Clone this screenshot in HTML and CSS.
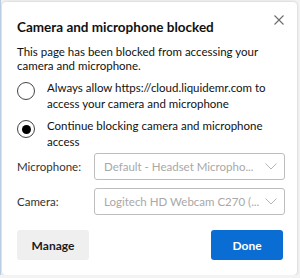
FILE: index.html
```html
<!DOCTYPE html>
<html lang="en">
<head>
    <meta charset="UTF-8">
    <title>Camera and microphone blocked</title>
    <link rel="stylesheet" href="styles.css">
</head>
<body>
    <div class="dialog">
        <div class="dialog-head">
            <h1>Camera and microphone blocked</h1>
            <button class="close-btn" aria-label="Close">
                <svg width="10" height="10" viewBox="0 0 10 10">
                    <path d="M0.5 0.5 L9.5 9.5 M9.5 0.5 L0.5 9.5" stroke="#6b6b6b" stroke-width="1.1" fill="none"/>
                </svg>
            </button>
        </div>

        <p class="intro">This page has been blocked from accessing your camera and microphone.</p>

        <div class="options">
            <label class="option">
                <span class="radio"></span>
                <span>Always allow https://cloud.liquidemr.com to access your camera and microphone</span>
            </label>
            <label class="option">
                <span class="radio checked"></span>
                <span>Continue blocking camera and microphone access</span>
            </label>
        </div>

        <div class="devices">
            <span class="device-label">Microphone:</span>
            <div class="select">
                <span class="select-text">Default - Headset Micropho...</span>
                <svg width="12" height="7" viewBox="0 0 12 7"><path d="M0.5 0.5 L6 6 L11.5 0.5" stroke="#b5b5b5" fill="none"/></svg>
            </div>
            <span class="device-label">Camera:</span>
            <div class="select">
                <span class="select-text">Logitech HD Webcam C270 (...</span>
                <svg width="12" height="7" viewBox="0 0 12 7"><path d="M0.5 0.5 L6 6 L11.5 0.5" stroke="#b5b5b5" fill="none"/></svg>
            </div>
        </div>

        <div class="actions">
            <button class="btn btn-manage">Manage</button>
            <button class="btn btn-done">Done</button>
        </div>
    </div>
</body>
</html>
```

FILE: styles.css
```css
/* Reset */
* {
    margin: 0;
    padding: 0;
    box-sizing: border-box;
}

body {
    font-family: "Segoe UI", Lato, sans-serif;
    font-size: 11.5px;
    color: #111;
    background-color: #f3f3f3;
    border-left: 1px solid #b9cde0;
    padding-top: 2px;
}

/* Dialog */
.dialog {
    width: 295px;
    height: 273px;
    margin-left: 1px;
    background: #fff;
    border-radius: 4px;
    box-shadow: 0 0 3px rgba(0, 0, 0, 0.2);
    padding: 16px 13px 12px 15px;
}

.dialog-head {
    display: flex;
    justify-content: space-between;
    align-items: flex-start;
}

.dialog-head h1 {
    font-size: 13.5px;
    font-weight: 700;
    line-height: 18px;
}

.close-btn {
    background: none;
    border: none;
    margin-top: -5px;
}

.intro {
    margin-top: 9px;
    line-height: 14px;
}

/* Radio options */
.options {
    margin-top: 7px;
    display: flex;
    flex-direction: column;
    gap: 6px;
}

.option {
    display: flex;
    align-items: flex-start;
    gap: 12px;
    line-height: 16px;
}

.radio {
    flex: none;
    width: 18px;
    height: 18px;
    margin-top: 2px;
    border: 1.5px solid #444;
    border-radius: 50%;
    display: flex;
    align-items: center;
    justify-content: center;
}

.radio.checked::after {
    content: "";
    width: 9px;
    height: 9px;
    border-radius: 50%;
    background: #000;
}

/* Device selects */
.devices {
    margin-top: 3px;
    display: grid;
    grid-template-columns: 77px 1fr;
    row-gap: 8px;
    align-items: center;
}

.device-label {
    color: #333;
}

.select {
    height: 27px;
    border: 1px solid #bdbdbd;
    border-radius: 3px;
    padding: 0 7px 0 9px;
    display: flex;
    align-items: center;
    gap: 6px;
    color: #a8a8a8;
    margin-right: 1px;
}

.select-text {
    flex: 1;
    white-space: nowrap;
    overflow: hidden;
}

/* Buttons */
.actions {
    margin-top: 15px;
    display: flex;
    justify-content: space-between;
    padding-right: 1px;
}

.btn {
    width: 72px;
    height: 30px;
    border: none;
    border-radius: 3px;
    font-family: inherit;
    font-size: 12px;
    font-weight: 700;
}

.btn-manage {
    background-color: #efefef;
    color: #1b1b1b;
}

.btn-done {
    background-color: #0a6dd3;
    color: #fff;
}
```
